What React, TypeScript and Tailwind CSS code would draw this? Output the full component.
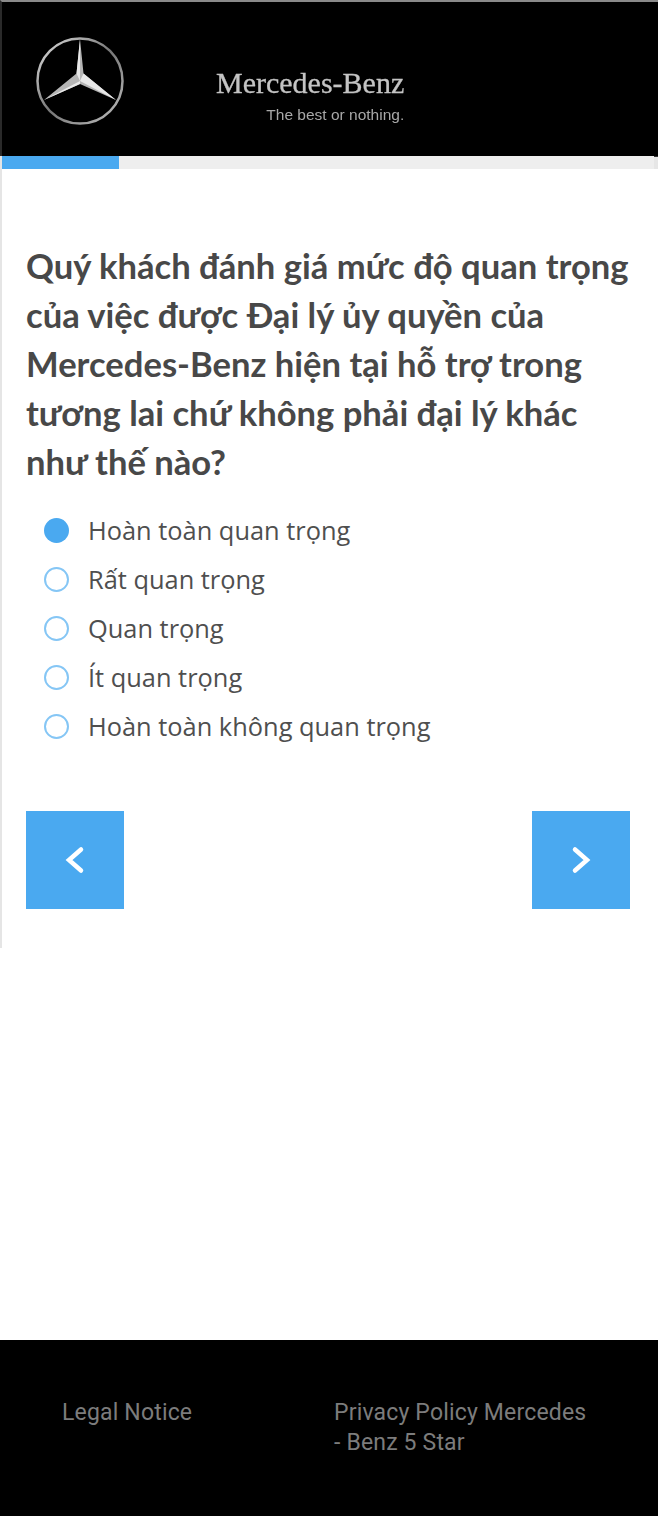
import React from 'react';

const options = [
  'Hoàn toàn quan trọng',
  'Rất quan trọng',
  'Quan trọng',
  'Ít quan trọng',
  'Hoàn toàn không quan trọng',
];

const App: React.FC = () => (
  <div className="flex h-[1516px] w-[658px] flex-col overflow-hidden bg-white font-['Open_Sans','Noto_Sans',sans-serif]">
    {/* Header */}
    <header className="flex h-[156px] items-center border-t-2 border-l-2 border-t-[#8a8a8a] border-l-[#2a2a2a] bg-black">
      <svg width="92" height="92" viewBox="0 0 92 92" className="mt-[4px] ml-[32px] blur-[0.5px]">
        <defs>
          <linearGradient id="ring" x1="0" y1="0" x2="1" y2="1">
            <stop offset="0" stopColor="#e0e0e0" />
            <stop offset="0.5" stopColor="#777" />
            <stop offset="1" stopColor="#c0c0c0" />
          </linearGradient>
        </defs>
        <circle cx="46" cy="46" r="42.5" fill="none" stroke="url(#ring)" strokeWidth="2.5" />
        <path d="M46 4 L49.5 38.5 L82 65 L46 49 L10 65 L42.5 38.5 Z" fill="#b5b5b5" />
        <path d="M46 4 L46 46 L42.5 38.5 Z M46 46 L10 65 L46 49 Z M46 46 L82 65 L49.5 38.5 Z" fill="#e8e8e8" />
      </svg>
      <div className="mt-[32px] ml-[90px] flex flex-col items-end text-[#c4c4c4] blur-[0.5px]">
        <span className="font-['Liberation_Serif',serif] text-[30px] leading-[32px] [-webkit-text-stroke:0.3px_#c4c4c4]">Mercedes-Benz</span>
        <span className="mt-[7px] font-['Liberation_Sans',sans-serif] text-[15.5px] leading-[18px] text-[#a8a8a8]">The best or nothing.</span>
      </div>
    </header>

    {/* Progress */}
    <div className="flex h-[13px] border-l-2 border-l-[#e5e5e5] bg-[#eeeeee]">
      <div className="h-full w-[117px] bg-[#4aa9f0]" />
      <div className="flex-1" />
      <div className="h-full w-[4px] border-t border-t-[#333] bg-[#e6e6e6]" />
    </div>

    {/* Question card */}
    <main className="flex h-[779px] flex-col border-l-2 border-l-[#e5e5e5] pr-[26px] pl-[24px]">
      <h1 className="mt-[72px] font-['Lato','Open_Sans',sans-serif] text-[34.6px] leading-[49px] font-bold text-[#484848]">
        Quý khách đánh giá mức độ quan trọng của việc được Đại lý ủy quyền của Mercedes-Benz hiện tại hỗ trợ trong tương lai chứ không phải đại lý khác như thế nào?
      </h1>
      <div className="mt-[20px] flex flex-col pl-[18px]">
        {options.map((label, i) => (
          <div key={label} className="flex h-[49px] items-center gap-[19px]">
            <span
              className={
                i === 0
                  ? 'h-[25px] w-[25px] rounded-full bg-[#4aa9f0]'
                  : 'h-[25px] w-[25px] rounded-full border-2 border-[#85c6f5] bg-white'
              }
            />
            <span className="text-[25.4px] text-[#4f4f4f]">{label}</span>
          </div>
        ))}
      </div>
      <div className="mt-[60px] flex justify-between pr-[2px]">
        <button className="flex h-[98px] w-[98px] items-center justify-center bg-[#4aa9f0]">
          <svg width="32" height="32" viewBox="0 0 32 32" fill="none" stroke="#fff" strokeWidth="4.5" strokeLinecap="round">
            <path d="M22 5.5 L10 16 L22 26.5" />
          </svg>
        </button>
        <button className="flex h-[98px] w-[98px] items-center justify-center bg-[#4aa9f0]">
          <svg width="32" height="32" viewBox="0 0 32 32" fill="none" stroke="#fff" strokeWidth="4.5" strokeLinecap="round">
            <path d="M10 5.5 L22 16 L10 26.5" />
          </svg>
        </button>
      </div>
    </main>

    <div className="flex-1" />

    {/* Footer */}
    <footer className="grid h-[176px] grid-cols-2 bg-black pt-[58px] font-['Roboto',sans-serif] text-[23px] leading-[30px] tracking-[0.17px] text-[#7c7c7c]">
      <div className="pl-[62px]">Legal Notice</div>
      <div className="pr-[60px] pl-[5px]">Privacy Policy Mercedes - Benz 5 Star</div>
    </footer>
  </div>
);

export default App;
